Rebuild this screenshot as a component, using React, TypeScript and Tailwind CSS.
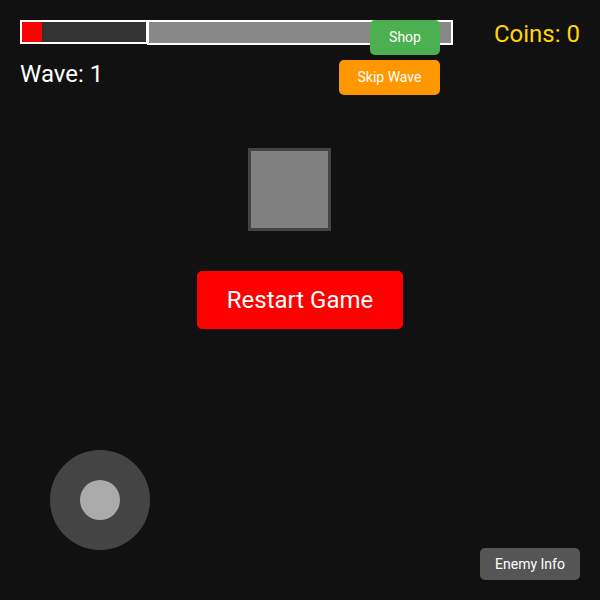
import React from "react";

export default function App() {
  return (
    <div
      className="flex h-[600px] w-[600px] flex-col overflow-hidden bg-[#111111] p-[20px] text-white"
      style={{ fontFamily: "Roboto, 'Liberation Sans', sans-serif" }}
    >
      {/* top HUD */}
      <div className="relative">
        <div className="flex items-start">
          {/* health bar */}
          <div className="flex h-[24px] w-[128px] border-2 border-white bg-[#333333]">
            <div className="h-full w-[20px] bg-[#ff0000]" />
          </div>
          {/* wave progress bar */}
          <div className="-ml-[1px] h-[25px] w-[306px] border-2 border-white bg-[#888888]" />
          <div className="ml-auto text-[24px] leading-[28px] text-[#ffd700]">Coins: 0</div>
        </div>

        <div className="mt-[12px] text-[24px] leading-[28px]">Wave: 1</div>

        {/* buttons float over the progress bar */}
        <div className="absolute left-[319px] top-0 flex w-[101px] flex-col items-end gap-[5px]">
          <button className="flex h-[35px] w-[70px] items-center justify-center rounded-[5px] bg-[#4caf50] text-[14px] text-white">
            Shop
          </button>
          <button className="flex h-[35px] w-[101px] items-center justify-center rounded-[5px] bg-[#ff9800] text-[14px] text-white">
            Skip Wave
          </button>
        </div>
      </div>

      {/* centre */}
      <div className="mt-[60px] flex flex-col items-center">
        <div className="mr-[21px] h-[83px] w-[83px] border-[3px] border-[#444444] bg-[#808080]" />
        <button className="mt-[40px] flex h-[58px] w-[206px] items-center justify-center rounded-[5px] bg-[#ff0000] text-[24px] text-white">
          Restart Game
        </button>
      </div>

      {/* bottom controls */}
      <div className="mt-auto flex items-end justify-between">
        <div className="mb-[30px] ml-[30px] flex h-[100px] w-[100px] items-center justify-center rounded-full bg-[#444444]">
          <div className="h-[40px] w-[40px] rounded-full bg-[#aaaaaa]" />
        </div>
        <button className="flex h-[32px] w-[100px] items-center justify-center rounded-[5px] bg-[#555555] text-[14px] text-white">
          Enemy Info
        </button>
      </div>
    </div>
  );
}
